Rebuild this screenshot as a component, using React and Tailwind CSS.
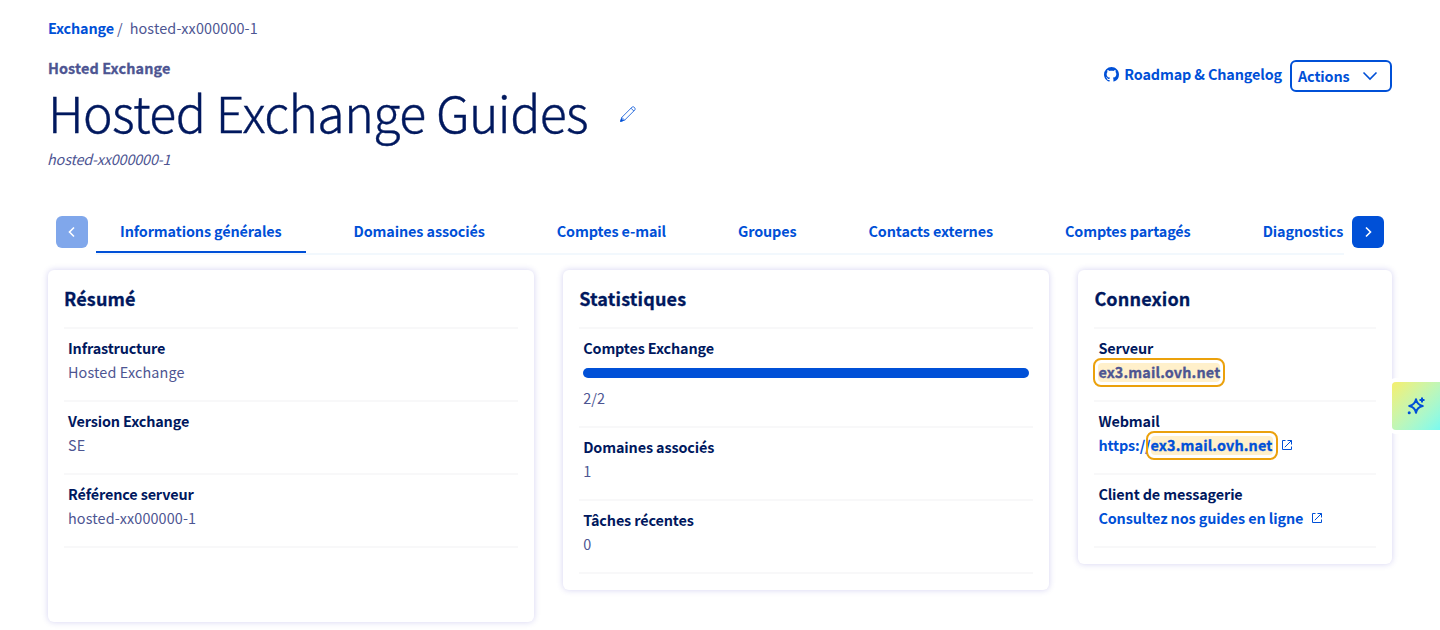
import { VscGithubInverted } from 'react-icons/vsc';

const tabs = [
  'Informations générales',
  'Domaines associés',
  'Comptes e-mail',
  'Groupes',
  'Contacts externes',
  'Comptes partagés',
  'Diagnostics',
];

const ExternalIcon = ({ className }) => (
  <svg viewBox="0 0 12 12" fill="none" stroke="currentColor" className={`w-3 h-3 shrink-0 ${className}`}>
    <path d="M4.5 1.5H1.5v9h9V7.5M6.5 1.5h4v4M10.5 1.5L3.8 8.2" />
  </svg>
);

const Chevron = ({ d }) => (
  <svg viewBox="0 0 16 16" fill="none" stroke="currentColor" strokeWidth="1.6" className="w-4 h-4">
    <path d={d} />
  </svg>
);

const Card = ({ title, className, children }) => (
  <section className={`rounded-md bg-white px-4 pb-4 shadow-[0_0_6px_rgba(60,50,190,0.22)] ${className}`}>
    <h2 className="h-[57px] pt-[14px] text-[18px] leading-7 font-bold tracking-[0.16px] text-[#00185e] [-webkit-text-stroke:0.3px]">
      {title}
    </h2>
    <dl className="border-t-2 border-[#f8f8f9]">{children}</dl>
  </section>
);

const Row = ({ label, children }) => (
  <div className="border-b-2 border-[#f8f8f9] px-1 pt-[7px] pb-4">
    <dt className="h-6 font-bold tracking-[-0.13px] text-[#00185e]">{label}</dt>
    <dd>{children}</dd>
  </div>
);

const Highlight = ({ children }) => (
  <span className="relative block h-6 w-fit font-bold tracking-[0.14px] [-webkit-text-stroke:0.3px]">
    <span className="absolute -inset-x-[5px] -top-[2px] -bottom-[3px] rounded-lg border-2 border-[#eba10c]" />
    <span className="absolute inset-x-0 top-[3px] bottom-[2px] rounded bg-[#fff0cb]" />
    <span className="relative">{children}</span>
  </span>
);

const App = () => {
  return (
    <div className="relative h-[630px] overflow-hidden bg-white px-12 font-['Noto_Sans_CJK_JP',sans-serif] text-[14.4px] leading-6 tracking-[0.13px] text-[#4d5592]">
      <nav className="flex pt-4">
        <a className="font-bold tracking-[-0.15px] text-[#0050d7]">Exchange</a>
        <span className="ml-[3px]">/</span>
        <span className="ml-[7px]">hosted-xx000000-1</span>
      </nav>

      <header className="mt-4 flex h-[159px] justify-between">
        <div>
          <p className="font-bold tracking-[0.14px] [-webkit-text-stroke:0.3px]">Hosted Exchange</p>
          <div className="-mt-px flex items-center">
            <h1 className="h-[68px] text-[50px] leading-[64px] font-light tracking-[-0.58px] whitespace-nowrap text-[#00185e] [-webkit-text-stroke:0.4px]">
              Hosted Exchange Guides
            </h1>
            <svg viewBox="0 0 16 16" fill="none" stroke="#0050d7" strokeWidth="0.8" className="mt-[2px] ml-8 w-4 h-4">
              <path d="M0.7 15.3L1.8 11.4L12.2 1Q13 0.3 13.8 1L15 2.2Q15.7 3 15 3.8L4.6 14.2ZM11 2.2L13.8 5M1.8 11.4L4.6 14.2" />
              <path d="M0.5 15.5L1.4 12.8L3.2 14.6Z" fill="#0050d7" />
            </svg>
          </div>
          <p className="-ml-px tracking-[-0.15px] italic">hosted-xx000000-1</p>
        </div>
        <div className="flex items-start pt-1 font-bold tracking-[-0.13px] text-[#0050d7]">
          <a className="mt-[2px] flex items-center">
            <VscGithubInverted className="mr-[5px] w-[15px] h-[15px]" />
            Roadmap &amp; Changelog
          </a>
          <button className="ml-2 flex h-8 w-[102px] items-center justify-between rounded-md border-2 border-[#0050d7] pl-1.5 pr-3">
            Actions
            <Chevron d="M1.500 4.500l6.500 6.500L14.500 4.500" />
          </button>
        </div>
      </header>

      <div className="flex items-start px-2 pt-px">
        <button className="flex h-8 w-8 shrink-0 items-center justify-center rounded-md bg-[#80a7eb] text-white">
          <Chevron d="M10 3.5L5.5 8l4.5 4.5" />
        </button>
        <ul className="mx-2 flex h-[39px] w-[1248px] gap-6 overflow-hidden border-b-2 border-[#f2f8fd] font-bold tracking-[-0.12px] whitespace-nowrap text-[#0050d7]">
          {tabs.map((tab, i) => (
            <li
              key={tab}
              className={`h-[37px] shrink-0 px-6 pt-[3px] ${i === 0 ? 'border-b-2 border-[#0050d7]' : ''}`}
            >
              {tab}
            </li>
          ))}
        </ul>
        <button className="flex h-8 w-8 shrink-0 items-center justify-center rounded-md bg-[#0050d7] text-white">
          <Chevron d="M6 3.5L10.5 8L6 12.5" />
        </button>
      </div>

      <main className="mt-[15px] flex items-start gap-[29.2px]">
        <Card title="Résumé" className="h-[352px] w-[486px]">
          <Row label="Infrastructure">Hosted Exchange</Row>
          <Row label="Version Exchange">SE</Row>
          <Row label="Référence serveur">hosted-xx000000-1</Row>
        </Card>

        <Card title="Statistiques" className="w-[486px]">
          <Row label="Comptes Exchange">
            <div className="mt-2 mb-2 h-[10px] rounded-full bg-[#0050d7]" />
            2/2
          </Row>
          <Row label="Domaines associés">1</Row>
          <Row label="Tâches récentes">0</Row>
        </Card>

        <Card title="Connexion" className="w-[313.6px]">
          <Row label="Serveur">
            <Highlight>ex3.mail.ovh.net</Highlight>
          </Row>
          <Row label="Webmail">
            <a className="flex items-center font-bold tracking-[-0.12px] text-[#0050d7]">
              https://
              <Highlight>ex3.mail.ovh.net</Highlight>
              <ExternalIcon className="ml-2" />
            </a>
          </Row>
          <Row label="Client de messagerie">
            <a className="flex items-center font-bold tracking-[-0.1px] text-[#0050d7]">
              Consultez nos guides en ligne
              <ExternalIcon className="ml-2" />
            </a>
          </Row>
        </Card>
      </main>

      <button className="absolute top-[382px] right-0 flex h-12 w-12 items-center justify-center rounded-l bg-linear-135 from-[#f5ef6a] to-[#79faf0] ring-4 ring-white">
        <svg viewBox="0 0 18 18" fill="none" stroke="#0050d7" strokeWidth="2" strokeLinejoin="round" className="w-[18px] h-[18px]">
          <path d="M9 2.2Q10 8 15.8 9Q10 10 9 15.8Q8 10 2.2 9Q8 8 9 2.2Z" />
          <path d="M15 0.5v5M12.5 3h5" />
          <circle cx="2.2" cy="15.8" r="1.5" fill="#0050d7" stroke="none" />
        </svg>
      </button>
    </div>
  );
};

export default App;
